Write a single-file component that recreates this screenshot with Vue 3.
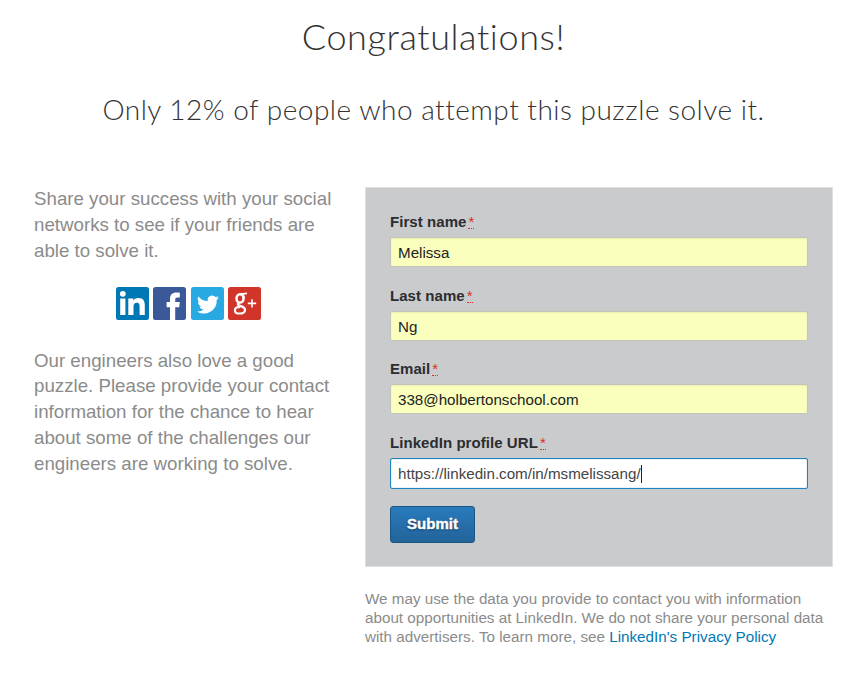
<script setup>
const fields = [
  { label: 'First name', value: 'Melissa' },
  { label: 'Last name', value: 'Ng' },
  { label: 'Email', value: '338@holbertonschool.com' },
  { label: 'LinkedIn profile URL', value: 'https://linkedin.com/in/msmelissang/', focused: true },
]
</script>

<template>
  <main class="page">
    <h1><span>Congratulations!</span></h1>
    <h2><span>Only 12% of people who attempt this puzzle solve it.</span></h2>
    <div class="columns">
      <section class="intro">
        <p>Share your success with your social<br />networks to see if your friends are<br />able to solve it.</p>
        <nav class="social">
          <svg viewBox="0 0 33 33" aria-label="LinkedIn">
            <rect width="33" height="33" rx="2.500" fill="#0077b5" />
            <circle cx="6.800" cy="6.800" r="2.900" fill="#fff" />
            <path fill="#fff" d="M4.200 11.500h5.200V28H4.200zM12.300 11.500h5v2.200c.8-1.500 2.500-2.600 5.100-2.600 5.200 0 6.400 3.300 6.400 7.700V28h-5.200v-8.200c0-2.200-.3-4.100-2.800-4.100s-3.300 1.800-3.300 4V28h-5.200z" />
          </svg>
          <svg viewBox="0 0 33 33" aria-label="Facebook">
            <rect width="33" height="33" rx="2.500" fill="#3b5998" />
            <path fill="#fff" d="M17 33V20.300h-3.400v-5.200H17v-3.300c0-4.200 2.500-6.300 6.300-6.300 1.500 0 2.800.1 3.500.2v4.700h-2.200c-1.900 0-2.400 1-2.400 2.300v2.400h4.600l-.6 5.200h-4V33z" />
          </svg>
          <svg viewBox="0 0 33 33" aria-label="Twitter">
            <rect width="33" height="33" rx="2.500" fill="#29a9e1" />
            <path transform="translate(.3 1.100)" fill="#fff" d="M27.700 9.600c-.8.4-1.700.6-2.600.7.9-.6 1.600-1.400 2-2.500-.9.5-1.800.9-2.900 1.100a4.500 4.500 0 0 0-7.700 4.100A12.800 12.800 0 0 1 7.200 8.300a4.500 4.500 0 0 0 1.400 6c-.7 0-1.400-.2-2-.6 0 2.200 1.500 4.100 3.600 4.500-.7.2-1.400.2-2 .1.600 1.800 2.200 3.100 4.200 3.100A9 9 0 0 1 5.700 23.300 12.800 12.800 0 0 0 25.400 11.900c.9-.6 1.700-1.400 2.300-2.300z" />
          </svg>
          <svg viewBox="0 0 33 33" aria-label="Google Plus">
            <rect width="33" height="33" rx="2.500" fill="#d13428" />
            <g fill="none" stroke="#fff">
              <ellipse cx="12" cy="11.400" rx="3.500" ry="4.200" stroke-width="2.500" />
              <path stroke-width="1.700" d="M12.300 7.200l6.700-.9M15 7.800q1.200 1 1 3.500" />
              <path stroke-width="2.200" d="M11 15.500c-2.200 1.700-1.300 2.700 1.200 3.400 3.700 1 5.100 2.200 4.800 4.400-.3 2.200-2.400 3.200-5.200 3.200-3.200 0-4.900-1.200-4.900-3.100 0-2.200 2.300-3.500 5.400-3.500" />
              <path stroke-width="1.600" d="M19.800 16.400h8.400M24 12.200v8.400" />
            </g>
          </svg>
        </nav>
        <p>Our engineers also love a good<br />puzzle. Please provide your contact<br />information for the chance to hear<br />about some of the challenges our<br />engineers are working to solve.</p>
      </section>
      <section class="contact">
        <form class="panel" @submit.prevent>
          <div v-for="f in fields" :key="f.label" class="field">
            <div class="label">{{ f.label }}<abbr>*</abbr></div>
            <div class="input" :class="{ focused: f.focused }" role="textbox">
              {{ f.value }}<i v-if="f.focused" class="caret"></i>
            </div>
          </div>
          <button type="submit">Submit</button>
        </form>
        <p class="notice">We may use the data you provide to contact you with information<br />about opportunities at LinkedIn. We do not share your personal data<br />with advertisers. To learn more, see <a>LinkedIn's Privacy Policy</a></p>
      </section>
    </div>
  </main>
</template>

<style>
body { background: #fff; }
</style>

<style scoped>
.page {
  box-sizing: border-box;
  width: 859px;
  height: 675px;
  padding: 14px 26px 0 34px;
  overflow: hidden;
  font-family: "Liberation Sans", Arial, sans-serif;
}
h1, h2 {
  margin: 0;
  font-family: Lato, sans-serif;
  font-weight: 300;
  color: #333;
  text-align: center;
  white-space: nowrap;
}
h1 { font-size: 36px; line-height: 44px; letter-spacing: .6px; }
h2 { margin-top: 33px; font-size: 28px; line-height: 36px; letter-spacing: .5px; }
.columns { display: flex; margin-top: 60px; }
.intro { width: 331px; flex: none; font-size: 18.720px; line-height: 25.850px; color: #8b8b8b; }
p { margin: 0; white-space: nowrap; }
.intro p:first-child { margin-top: -1px; }
.social { display: flex; gap: 4.400px; margin: 23.400px 0 27.600px 82px; }
.social svg { display: block; width: 33px; height: 33px; }
.contact { width: 468px; }
.panel {
  box-sizing: border-box;
  height: 380px;
  padding: 23px 24px 0;
  border: 1px solid #dfe0e1;
  background: #cacbcd;
}
.field { height: 73.700px; }
.label {
  display: flex;
  height: 26px;
  line-height: 22px;
  font-size: 15px;
  font-weight: bold;
  letter-spacing: .06px;
  color: #2b2d30;
}
.label abbr {
  box-sizing: border-box;
  height: 13px;
  margin: 5px 0 0 2px;
  border-bottom: 1px dotted #dd2e1f;
  font-size: 15px;
  font-weight: normal;
  line-height: 12px;
  letter-spacing: 0;
  color: #dd2e1f;
}
.input {
  display: flex;
  align-items: center;
  box-sizing: border-box;
  height: 30px;
  padding: 1px 7px 0;
  border: 1px solid #c3c4bd;
  border-radius: 2px;
  background: #faffbd;
  box-shadow: inset 0 1px 2px rgba(0, 0, 0, .07);
  font-size: 15.170px;
  color: #222;
  white-space: nowrap;
}
.input.focused { height: 31px; padding-top: 0; border-color: #1f83bd; background: #fff; box-shadow: inset 0 0 1px #1f83bd; color: #444; }
.caret { width: 1px; height: 18px; background: #222; }
button {
  display: block;
  width: 85px;
  height: 37px;
  margin: 0;
  padding: 0 0 1px;
  border: 1px solid #1b5685;
  border-radius: 3px;
  background: linear-gradient(#287bbc, #23639a);
  font: bold 15px "Liberation Sans", Arial, sans-serif;
  -webkit-text-stroke: .4px #fff;
  color: #fff;
  text-shadow: 0 1px 2px rgba(0, 0, 0, .6);
}
.notice { margin-top: 22px; font-size: 15.220px; line-height: 19px; color: #8b8b8b; }
.notice a { color: #0077b5; }
</style>
